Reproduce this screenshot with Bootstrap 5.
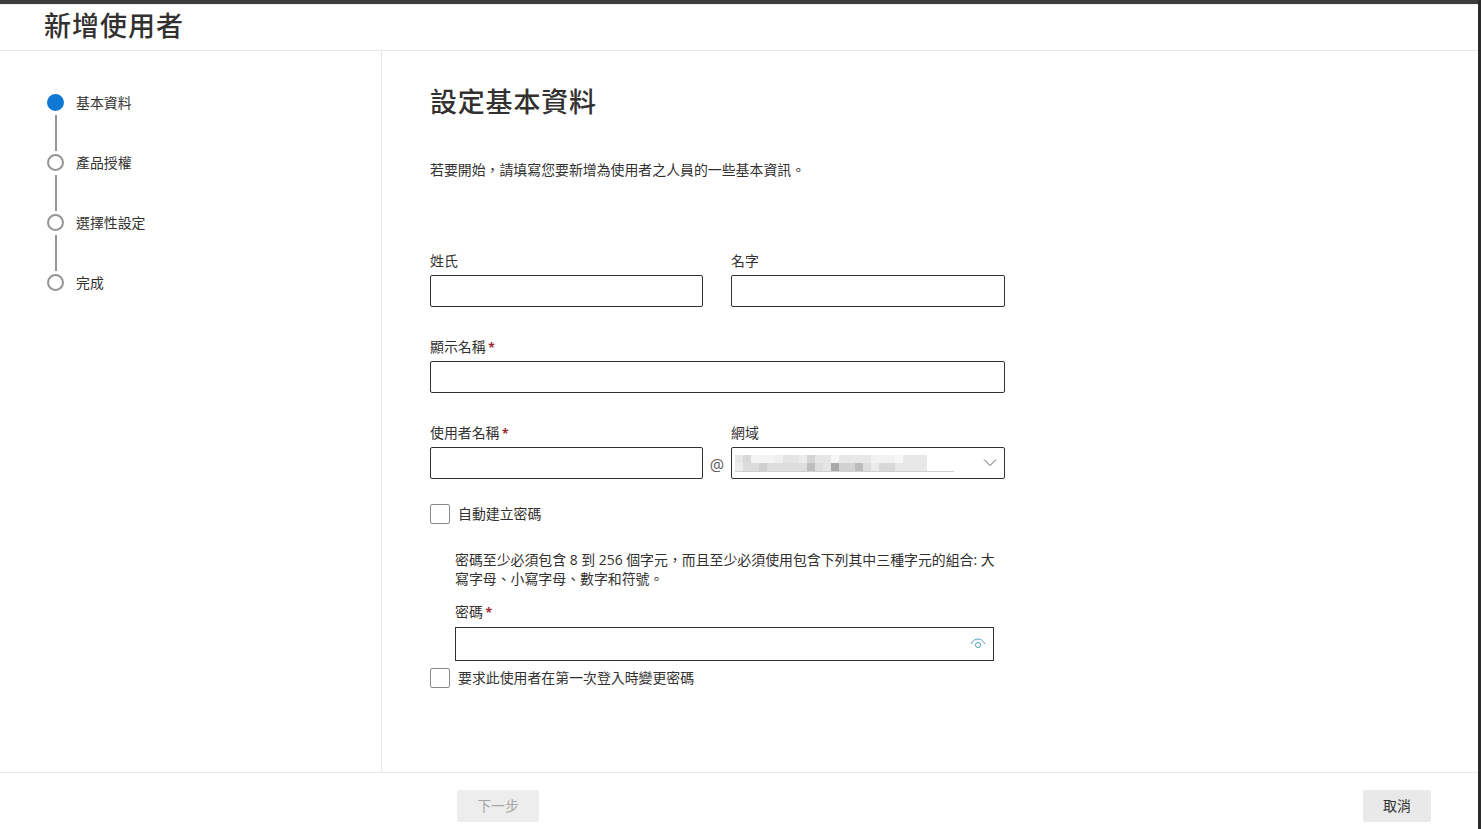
<!DOCTYPE html>
<html lang="zh-Hant">
<head>
<meta charset="utf-8">
<title>新增使用者</title>
<link href="https://cdn.jsdelivr.net/npm/bootstrap@5.3.0/dist/css/bootstrap.min.css" rel="stylesheet">
<style>
html,body{height:100%;overflow:hidden;background:#fff}
body{font-family:"Open Sans","Noto Sans CJK TC",sans-serif;font-size:13.9px;color:#323130}
.shell{height:829px;width:1481px;border-right:3px solid #2b2b2b}
.topbar{height:4px;background:#3c3c3c;flex:none}
.headbar{height:47px;flex:none;border-top:1px solid #eee;border-bottom:1px solid #e8e8e8;padding-left:44px}
.headbar h1{font-size:27px;font-weight:500;line-height:42px;letter-spacing:1px;margin:0;color:#323130}
.middle{flex:1 1 auto;min-height:0}
.stepcol{width:382px;flex:none;border-right:1px solid #e8e8e8;padding:42px 0 0 47px}
.stepitem{height:60px;position:relative;gap:12px;line-height:20px}
.stepdot{width:17px;height:17px;border-radius:50%;border:2px solid #979593;background:#fff;flex:none;margin-top:1px}
.stepdot.now{background:#0f78d4;border-color:#0f78d4}
.stepline{position:absolute;left:8px;top:22px;height:36px;width:2px;background:#979593}
.formcol{padding:34px 0 0 48px;flex:1 1 auto}
.formcol h2{font-size:27px;font-weight:500;line-height:34px;letter-spacing:.8px;margin:0 0 41px;color:#323130}
.intro{line-height:20px;margin:0 0 71px}
.formwrap{width:575px}
.fieldlabel{display:block;height:20px;line-height:20px;margin:0 0 4px;color:#323130}
.fieldlabel b,.pwlabel b{color:#a4262c;font-weight:700;font-size:12px;line-height:1;margin-left:-1px}
.boxinput{display:block;width:100%;height:32px;border:1px solid #323130;border-radius:2px;background:#fff;padding:0 8px;outline:0}
.halfcol{width:274px;flex:none}
.halfcol.narrowcol{width:273px}
.pairgap{gap:28px}
.blockgap{margin-top:30px}
.atmark{width:28px;text-align:center;font-size:16px;color:#605e5c;line-height:28px;flex:none}
.selectbox{position:relative;overflow:hidden}
.blurbits{position:absolute;left:3px;top:7px}
.chev{position:absolute;right:7px;top:10px}
.checkrow{gap:8px;align-items:center;line-height:20px}
.checkbox-sq{width:20px;height:20px;border:1px solid #8a8886;border-radius:2px;background:#fff;flex:none}
.pwblock{padding-left:25px;width:564px}
.pwhelp{line-height:19px;margin:26px 0 14px;width:545px}
.pwlabel{height:20px;line-height:20px;margin-bottom:5px;display:block}
.pwinput{height:34px;border:1px solid #323130;border-radius:0;position:relative}
.pwinput svg{position:absolute;right:7px;top:8px}
.footerbar{height:57px;flex:none;border-top:1px solid #e8e8e8;padding:17px 47px 0 457px}
.stepbtn{width:82px;height:32px;border:0;border-radius:2px;background:#ededed;color:#a6a6a6;font-size:13.9px;padding:0}
.cancelbtn{width:68px;height:32px;border:0;border-radius:2px;background:#e9e9e9;color:#323130;font-size:13.9px;padding:0}
</style>
</head>
<body>
<div class="shell d-flex flex-column">
  <div class="topbar"></div>
  <header class="headbar"><h1>新增使用者</h1></header>
  <div class="middle d-flex">
    <nav class="stepcol">
      <div class="stepitem d-flex"><span class="stepdot now"></span><span>基本資料</span><span class="stepline"></span></div>
      <div class="stepitem d-flex"><span class="stepdot"></span><span>產品授權</span><span class="stepline"></span></div>
      <div class="stepitem d-flex"><span class="stepdot"></span><span>選擇性設定</span><span class="stepline"></span></div>
      <div class="stepitem d-flex"><span class="stepdot"></span><span>完成</span></div>
    </nav>
    <main class="formcol">
      <h2>設定基本資料</h2>
      <p class="intro">若要開始，請填寫您要新增為使用者之人員的一些基本資訊。</p>
      <div class="formwrap">
        <div class="d-flex pairgap">
          <div class="halfcol narrowcol"><label class="fieldlabel">姓氏</label><input class="boxinput" type="text"></div>
          <div class="halfcol"><label class="fieldlabel">名字</label><input class="boxinput" type="text"></div>
        </div>
        <div class="blockgap"><label class="fieldlabel">顯示名稱 <b>*</b></label><input class="boxinput" type="text"></div>
        <div class="d-flex blockgap">
          <div class="halfcol narrowcol"><label class="fieldlabel">使用者名稱 <b>*</b></label><input class="boxinput" type="text"></div>
          <div class="atmark align-self-end">@</div>
          <div class="halfcol"><label class="fieldlabel">網域</label>
            <div class="boxinput selectbox">
              <svg class="blurbits" width="220" height="18" viewBox="0 0 220 18">
                <rect x="0" y="0" width="8" height="8" fill="#e8e8e8"/><rect x="8" y="0" width="8" height="8" fill="#d8d8d8"/><rect x="16" y="0" width="24" height="8" fill="#f4f4f4"/><rect x="40" y="0" width="8" height="8" fill="#f0f0f0"/><rect x="48" y="0" width="16" height="8" fill="#e4e4e4"/><rect x="64" y="0" width="8" height="8" fill="#ececec"/><rect x="72" y="0" width="8" height="8" fill="#d4d4d4"/><rect x="80" y="0" width="16" height="8" fill="#e6e6e6"/><rect x="96" y="0" width="8" height="8" fill="#f6f6f6"/><rect x="104" y="0" width="32" height="8" fill="#e8e8e8"/><rect x="136" y="0" width="24" height="8" fill="#f2f2f2"/><rect x="160" y="0" width="8" height="8" fill="#f7f7f7"/><rect x="168" y="0" width="24" height="8" fill="#e8e8e8"/>
                <rect x="0" y="8" width="8" height="8" fill="#ededed"/><rect x="8" y="8" width="16" height="8" fill="#dcdcdc"/><rect x="24" y="8" width="8" height="8" fill="#cfcfcf"/><rect x="32" y="8" width="40" height="8" fill="#dedede"/><rect x="72" y="8" width="8" height="8" fill="#bdbdbd"/><rect x="80" y="8" width="8" height="8" fill="#dedede"/><rect x="88" y="8" width="8" height="8" fill="#e4e4e4"/><rect x="96" y="8" width="8" height="8" fill="#a9a9a9"/><rect x="104" y="8" width="16" height="8" fill="#d2d2d2"/><rect x="120" y="8" width="8" height="8" fill="#bcbcbc"/><rect x="128" y="8" width="8" height="8" fill="#dedede"/><rect x="136" y="8" width="8" height="8" fill="#ececec"/><rect x="144" y="8" width="16" height="8" fill="#d8d8d8"/><rect x="160" y="8" width="32" height="8" fill="#e8e8e8"/>
                <rect x="0" y="16" width="219" height="1" fill="#cfcfcf"/>
              </svg>
              <svg class="chev" width="14" height="9" viewBox="0 0 14 9"><path d="M1 1.500 7 7.500 13 1.500" fill="none" stroke="#605e5c" stroke-width="1"/></svg>
            </div>
          </div>
        </div>
        <div class="d-flex checkrow" style="margin-top:25px"><span class="checkbox-sq"></span><span>自動建立密碼</span></div>
        <div class="pwblock">
          <p class="pwhelp">密碼至少必須包含 8 到 256 個字元，而且至少必須使用包含下列其中三種字元的組合: 大寫字母、小寫字母、數字和符號。</p>
          <label class="pwlabel">密碼 <b>*</b></label>
          <div class="pwinput">
            <svg width="16" height="14" viewBox="0 0 16 14"><path d="M1 8C3 4.500 5.500 3 8 3s5 1.500 7 5" fill="none" stroke="#4f9ebb" stroke-width="1"/><circle cx="8" cy="9" r="2.500" fill="none" stroke="#4f9ebb" stroke-width="1"/></svg>
          </div>
        </div>
        <div class="d-flex checkrow" style="margin-top:7px"><span class="checkbox-sq"></span><span>要求此使用者在第一次登入時變更密碼</span></div>
      </div>
    </main>
  </div>
  <footer class="footerbar d-flex justify-content-between">
    <button class="stepbtn" type="button" disabled>下一步</button>
    <button class="cancelbtn" type="button">取消</button>
  </footer>
</div>
<script src="https://cdn.jsdelivr.net/npm/bootstrap@5.3.0/dist/js/bootstrap.bundle.min.js"></script>
</body>
</html>
